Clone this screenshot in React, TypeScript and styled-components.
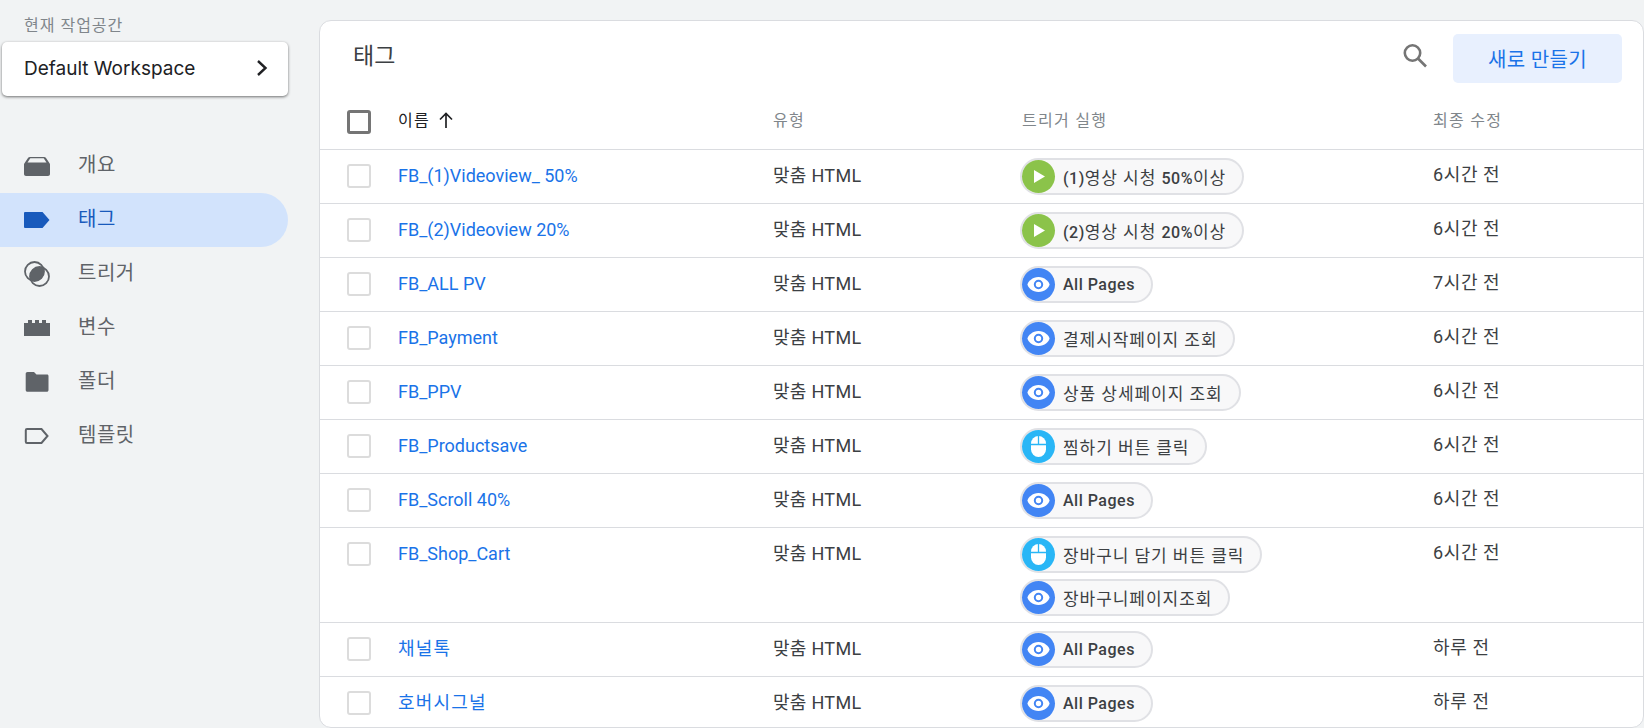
import React from "react";
import styled, { createGlobalStyle } from "styled-components";

const Global = createGlobalStyle`
  html, body { margin: 0; padding: 0; height: 728px; overflow: hidden; background: #f1f3f4; }
  body { font-family: Roboto, "Noto Sans CJK KR", sans-serif; }
  #root { height: 728px; }
  * { box-sizing: border-box; }
`;

const Page = styled.div`
  display: grid;
  grid-template-columns: 319px 1fr;
  height: 728px;
  overflow: hidden;
`;
const Sidebar = styled.aside`
  display: flex;
  flex-direction: column;
  padding-top: 16px;
`;
const WsLabel = styled.div`
  font-size: 16px;
  line-height: 20px;
  letter-spacing: 1px;
  color: #80868b;
  padding-left: 24px;
  margin-bottom: 6px;
`;
const WsCard = styled.div`
  margin-left: 2px;
  width: 286px;
  height: 54px;
  border-radius: 5px;
  background: #fff;
  box-shadow: 0 1px 3px rgba(0, 0, 0, 0.55);
  display: flex;
  align-items: center;
  justify-content: space-between;
  padding: 0 20px 2px 22px;
  font-family: Inter, sans-serif;
  font-size: 19px;
  font-weight: 400;
  color: #202124;
`;
const Nav = styled.nav`
  display: flex;
  flex-direction: column;
  margin-top: 43px;
  width: 288px;
`;
const NavItem = styled.div<{ $active?: boolean }>`
  height: 54px;
  display: flex;
  align-items: center;
  gap: 28px;
  padding-left: 24px;
  font-size: 20px;
  letter-spacing: 0.5px;
  color: ${(p) => (p.$active ? "#185abc" : "#5f6368")};
  background: ${(p) => (p.$active ? "#d2e3fc" : "transparent")};
  border-radius: 0 27px 27px 0;
  svg { flex: none; }
`;
const NavText = styled.span`
  position: relative;
  top: -3px;
`;
const Main = styled.main`
  padding-top: 20px;
  height: 728px;
`;
const Card = styled.section`
  height: 708px;
  background: #fff;
  border: 1px solid #dadce0;
  border-radius: 12px;
  overflow: hidden;
`;
const CardHead = styled.header`
  height: 79px;
  display: flex;
  align-items: flex-start;
  padding: 13px 21px 0 33px;
`;
const Title = styled.h1`
  margin: 4px 0 0;
  flex: 1;
  font-size: 23px;
  line-height: 38px;
  font-weight: 400;
  color: #3c4043;
`;
const SearchBtn = styled.div`
  width: 30px;
  height: 30px;
  margin: 8px 22px 0 0;
  color: #757575;
`;
const NewBtn = styled.button`
  width: 169px;
  height: 49px;
  border: 0;
  border-radius: 5px;
  background: #e8f0fe;
  color: #1a73e8;
  font: 400 20px Roboto, "Noto Sans CJK KR", sans-serif;
  letter-spacing: 0.3px;
`;
const cols = "78px 375px 249px 411px 1fr";
const HeadRow = styled.div`
  display: grid;
  grid-template-columns: ${cols};
  height: 50px;
  border-bottom: 1px solid #dadce0;
  padding-top: 10px;
`;
const HeadCell = styled.div<{ $dark?: boolean }>`
  display: flex;
  align-items: flex-start;
  gap: 8px;
  padding-top: 1px;
  font-size: 16px;
  line-height: 20px;
  letter-spacing: 1.3px;
  color: ${(p) => (p.$dark ? "#202124" : "#80868b")};
`;
const Row = styled.div`
  display: grid;
  grid-template-columns: ${cols};
  min-height: 54px;
  border-bottom: 1px solid #dadce0;
`;
const Check = styled.span<{ $head?: boolean }>`
  display: block;
  width: 24px;
  height: 24px;
  margin-left: 27px;
  margin-top: ${(p) => (p.$head ? "0" : "14px")};
  border: ${(p) => (p.$head ? "3px solid #757575" : "2.5px solid #dcdcdc")};
  border-radius: 3px;
`;
const NameCell = styled.div<{ $ko?: boolean }>`
  font-size: 18px;
  line-height: 24px;
  padding-top: 14px;
  letter-spacing: ${(p) => (p.$ko ? "1.2px" : "0")};
  color: #1a73e8;
`;
const TypeCell = styled.div`
  font-size: 18px;
  line-height: 24px;
  padding-top: 14px;
  letter-spacing: 0.3px;
  color: #3c4043;
`;
const TriggerCell = styled.div`
  display: flex;
  flex-direction: column;
  align-items: flex-start;
  gap: 6px;
  padding: 8px 0 6px;
  margin-left: -2px;
`;
const TimeCell = styled.div`
  font-size: 18px;
  line-height: 24px;
  padding-top: 13px;
  letter-spacing: 0.6px;
  color: #3c4043;
`;
const Chip = styled.div`
  height: 37px;
  display: inline-flex;
  align-items: center;
  gap: 8px;
  padding-right: 16px;
  border: 2px solid #e0e1e5;
  border-radius: 19px;
  background: #f8f8f9;
  font-size: 16px;
  font-weight: 500;
  letter-spacing: 0.5px;
  color: #3c4043;
  white-space: nowrap;
`;
const Ko = styled.span`
  font-size: 17px;
  font-weight: 400;
  letter-spacing: 0.95px;
`;
const Badge = styled.span<{ $color: string }>`
  width: 33px;
  height: 33px;
  border-radius: 50%;
  background: ${(p) => p.$color};
  display: flex;
  align-items: center;
  justify-content: center;
`;

const IconOverview = () => (
  <svg width="26" height="22" viewBox="0 0 26 22"><path d="M6 2h14c1 0 1.700.4 2.200 1.200L25.700 8.500c.2.300.3.600.3 1V19c0 1.100-.9 2-2 2H2c-1.100 0-2-.9-2-2V9.500c0-.4.100-.7.300-1L3.800 3.200C4.300 2.400 5 2 6 2z" fill="#5f6368"/><path d="M6.300 3.300h13.400L22.500 7.500h-19z" fill="#f1f3f4"/></svg>
);
const IconTag = () => (
  <svg width="26" height="18" viewBox="0 0 26 18"><path d="M1 1h17.500L25.500 9l-7 8H1a1 1 0 0 1-1-1V2a1 1 0 0 1 1-1z" fill="#185abc"/></svg>
);
const IconTrigger = () => (
  <svg width="26" height="26" viewBox="0 0 26 26"><circle cx="10.500" cy="10.500" r="9.500" fill="none" stroke="#5f6368" strokeWidth="1.800"/><circle cx="15.500" cy="15.500" r="9.500" fill="none" stroke="#5f6368" strokeWidth="1.800"/><path d="M6 15.500C6 10 10 6 15.500 6 18.800 6 20 7.200 20 10.500 20 16 16 20 10.500 20 7.200 20 6 18.800 6 15.500z" fill="#5f6368"/></svg>
);
const IconVariable = () => (
  <svg width="26" height="16" viewBox="0 0 26 16"><path d="M0 3h4V0h4v3h3V0h4v3h3V0h4v3h4v13H0z" fill="#5f6368"/></svg>
);
const IconFolder = () => (
  <svg width="26" height="20" viewBox="0 0 26 20"><path d="M3.500 0H10l2.500 2.500H23c1 0 1.500.7 1.500 1.700V18c0 1-.7 1.800-1.700 1.800H3.500c-1 0-1.800-.8-1.800-1.800V1.800C1.700.8 2.500 0 3.500 0z" fill="#5f6368"/></svg>
);
const IconTemplate = () => (
  <svg width="26" height="18" viewBox="0 0 26 18"><path d="M3 2h14.500L23.500 9l-6 7H3a1.200 1.200 0 0 1-1.200-1.200V3.200A1.200 1.200 0 0 1 3 2z" fill="none" stroke="#5f6368" strokeWidth="2"/></svg>
);
const IconPlay = () => (
  <svg width="33" height="33" viewBox="0 0 33 33"><path d="M12 10 23 16.500 12 23z" fill="#fff"/></svg>
);
const IconEye = () => (
  <svg width="33" height="33" viewBox="0 0 33 33"><path d="M16.500 9C10.500 9 6 13.500 5.500 16.500 6 19.500 10.500 24 16.500 24s10.500-4.500 11-7.500C27 13.500 22.500 9 16.500 9z" fill="#fff"/><circle cx="16.500" cy="16.500" r="3.700" fill="#fff" stroke="#4285f4" strokeWidth="2"/></svg>
);
const IconMouse = () => (
  <svg width="33" height="33" viewBox="0 0 33 33"><rect x="9" y="6" width="15" height="21" rx="7.500" fill="#fff"/><path d="M9 14.500h15M16.500 6V14.500" stroke="#29b6f6" strokeWidth="1.300"/></svg>
);

type Kind = "play" | "eye" | "mouse";
const badgeColor: Record<Kind, string> = { play: "#8bc34a", eye: "#4285f4", mouse: "#29b6f6" };
const badgeIcon: Record<Kind, React.ReactNode> = { play: <IconPlay />, eye: <IconEye />, mouse: <IconMouse /> };

const TriggerChip = ({ kind, children }: { kind: Kind; children: React.ReactNode }) => (
  <Chip>
    <Badge $color={badgeColor[kind]}>{badgeIcon[kind]}</Badge>
    <span>{children}</span>
  </Chip>
);

const allPages = <TriggerChip kind="eye">All Pages</TriggerChip>;
const rows: { name: string; ko?: boolean; chips: React.ReactNode; time: string }[] = [
  { name: "FB_(1)Videoview_ 50%", chips: <TriggerChip kind="play">(1)<Ko>영상 시청 </Ko>50%<Ko>이상</Ko></TriggerChip>, time: "6시간 전" },
  { name: "FB_(2)Videoview 20%", chips: <TriggerChip kind="play">(2)<Ko>영상 시청 </Ko>20%<Ko>이상</Ko></TriggerChip>, time: "6시간 전" },
  { name: "FB_ALL PV", chips: allPages, time: "7시간 전" },
  { name: "FB_Payment", chips: <TriggerChip kind="eye"><Ko>결제시작페이지 조회</Ko></TriggerChip>, time: "6시간 전" },
  { name: "FB_PPV", chips: <TriggerChip kind="eye"><Ko>상품 상세페이지 조회</Ko></TriggerChip>, time: "6시간 전" },
  { name: "FB_Productsave", chips: <TriggerChip kind="mouse"><Ko>찜하기 버튼 클릭</Ko></TriggerChip>, time: "6시간 전" },
  { name: "FB_Scroll 40%", chips: allPages, time: "6시간 전" },
  {
    name: "FB_Shop_Cart",
    chips: (
      <>
        <TriggerChip kind="mouse"><Ko>장바구니 담기 버튼 클릭</Ko></TriggerChip>
        <TriggerChip kind="eye"><Ko>장바구니페이지조회</Ko></TriggerChip>
      </>
    ),
    time: "6시간 전",
  },
  { name: "채널톡", ko: true, chips: allPages, time: "하루 전" },
  { name: "호버시그널", ko: true, chips: allPages, time: "하루 전" },
];

const nav: { label: string; icon: React.ReactNode; active?: boolean }[] = [
  { label: "개요", icon: <IconOverview /> },
  { label: "태그", icon: <IconTag />, active: true },
  { label: "트리거", icon: <IconTrigger /> },
  { label: "변수", icon: <IconVariable /> },
  { label: "폴더", icon: <IconFolder /> },
  { label: "템플릿", icon: <IconTemplate /> },
];

export default function App() {
  return (
    <Page>
      <Global />
      <Sidebar>
        <WsLabel>현재 작업공간</WsLabel>
        <WsCard>
          Default Workspace
          <svg width="12" height="18" viewBox="0 0 12 18"><path d="M2 2l7.500 7L2 16" fill="none" stroke="#202124" strokeWidth="2.400"/></svg>
        </WsCard>
        <Nav>
          {nav.map((n) => (
            <NavItem key={n.label} $active={n.active}>
              {n.icon}
              <NavText>{n.label}</NavText>
            </NavItem>
          ))}
        </Nav>
      </Sidebar>
      <Main>
        <Card>
          <CardHead>
            <Title>태그</Title>
            <SearchBtn>
              <svg width="30" height="30" viewBox="0 0 30 30"><circle cx="11.500" cy="11" r="7.700" fill="none" stroke="currentColor" strokeWidth="2.600"/><path d="M17 16.500l8 8" stroke="currentColor" strokeWidth="2.600"/></svg>
            </SearchBtn>
            <NewBtn>새로 만들기</NewBtn>
          </CardHead>
          <HeadRow>
            <Check $head />
            <HeadCell $dark>
              이름
              <svg width="16" height="18" viewBox="0 0 16 18"><path d="M8 17V3M2 8.500 8 2.500l6 6" fill="none" stroke="#202124" strokeWidth="1.700"/></svg>
            </HeadCell>
            <HeadCell>유형</HeadCell>
            <HeadCell>트리거 실행</HeadCell>
            <HeadCell>최종 수정</HeadCell>
          </HeadRow>
          {rows.map((r) => (
            <Row key={r.name}>
              <Check />
              <NameCell $ko={r.ko}>{r.name}</NameCell>
              <TypeCell>맞춤 HTML</TypeCell>
              <TriggerCell>{r.chips}</TriggerCell>
              <TimeCell>{r.time}</TimeCell>
            </Row>
          ))}
        </Card>
      </Main>
    </Page>
  );
}
